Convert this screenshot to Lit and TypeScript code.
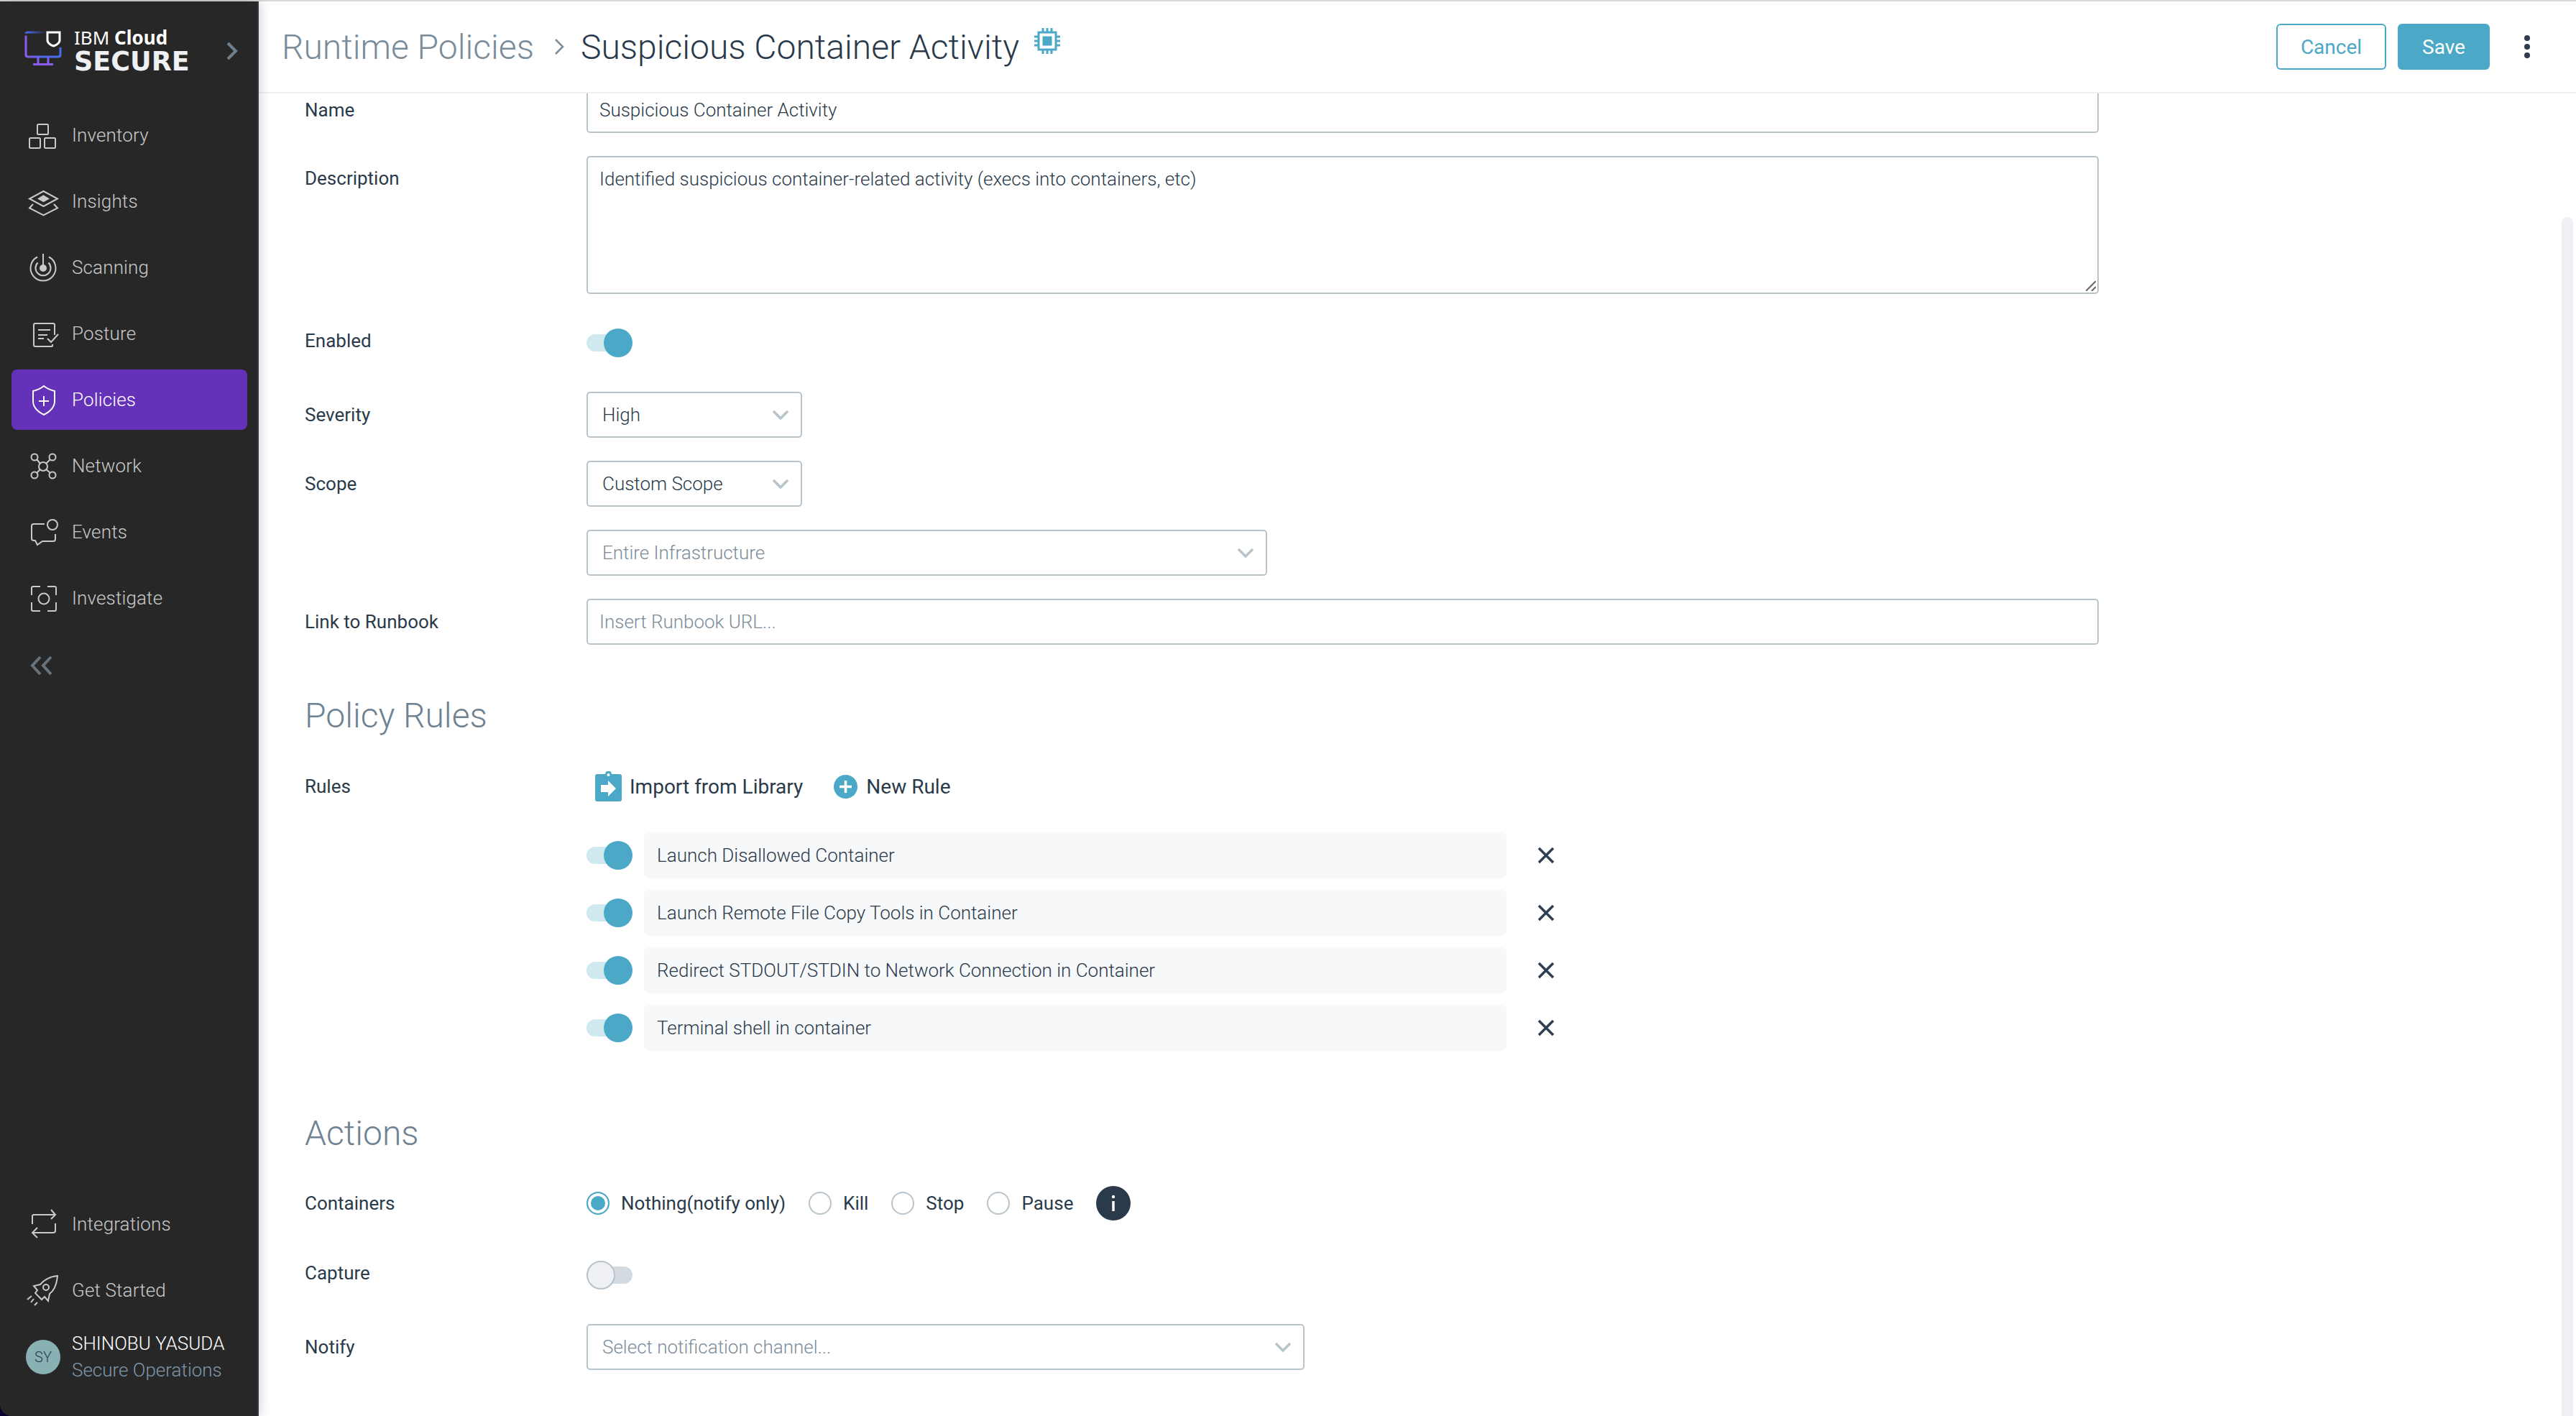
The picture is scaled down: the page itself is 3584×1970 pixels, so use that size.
import { LitElement, html, css, svg } from "lit";
import { customElement } from "lit/decorators.js";

const icons: Record<string, unknown> = {
  inventory: svg`<rect x="16" y="9" width="15" height="14" rx="1.5"/><rect x="5" y="28" width="15" height="14" rx="1.5"/><rect x="26" y="28" width="15" height="14" rx="1.5"/>`,
  insights: svg`<path d="M24.5 10 44 20.5 24.5 31 5 20.5Z"/><path d="M24.5 16.5 31 20.5 24.5 24 18 20.5Z" fill="currentColor"/><path d="M10 28 5 33.500 24.500 43.500 44 33.500 39 28"/>`,
  scanning: svg`<path d="M16 9.500A17.500 17.500 0 1 0 32 9.500"/><path d="M16.500 17.500A10.500 10.500 0 1 0 31.500 17.500"/><path d="M24 5V25"/><circle cx="24" cy="25" r="4" fill="currentColor"/>`,
  posture: svg`<path d="M37 39V41Q37 42 35 42H13Q11 42 11 40V12Q11 10 13 10H38Q40 10 40 12V26"/><path d="M17 19H34M17 26H30M17 31H25"/><path d="M30 31 35 36 45 25"/>`,
  policies: svg`<path d="M25 5C30 9 35 11 40 12V26C40 35 33 41 25 45 17 41 10 35 10 26V12C15 11 20 9 25 5Z"/><path d="M25 19V33M18 26H32"/>`,
  network: svg`<circle cx="24" cy="25" r="6"/><circle cx="12" cy="12" r="4.500"/><circle cx="37" cy="12" r="4.500"/><circle cx="12" cy="37" r="4.500"/><circle cx="37" cy="37" r="4.500"/><path d="M15.500 15.500 20 21M33.500 15.500 28 21M15.500 33.500 20 29M33.500 33.500 28 29"/>`,
  events: svg`<path d="M26 13H11Q8 13 8 16V33Q8 36 11 36H13L16 42 23 37H38Q41 37 41 34V27"/><circle cx="37" cy="14" r="7"/>`,
  investigate: svg`<path d="M20 8H10Q8 8 8 10V20M30 8H40Q42 8 42 10V20M42 30V40Q42 42 40 42H30M20 42H10Q8 42 8 40V30"/><circle cx="25" cy="25" r="7.500"/>`,
  integrations: svg`<path d="M9 24V13Q9 11 11 11H41"/><path d="M35 4 41 11 35 17"/><path d="M41 23V33Q41 36 38 36H10"/><path d="M16 29 9 36 16 43"/>`,
  rocket: svg`<path d="M44 4C33 5 26 9 20 16L11 18 16 24 13 28 22 37 26 33 31 39 33 29C40 24 43 15 44 4Z"/><circle cx="28" cy="20" r="4"/><path d="M2 37 8 32M7 41 11 36M12 45 16 41"/>`,
};

const chevron = html`<svg class="chev" viewBox="0 0 24 14"><path d="M2 2 12 12 22 2"/></svg>`;
const toggle = (on = true) => html`<span class="toggle ${on ? "on" : "off"}"><span class="track"></span><span class="knob"></span></span>`;

@customElement("app-root")
export class AppRoot extends LitElement {
  static styles = css`
    :host { display: block; font-family: Roboto, "Liberation Sans", sans-serif; color: #2a3a4a; }
    * { box-sizing: border-box; }
    .page { width: 3584px; height: 1970px; display: flex; flex-direction: column; background: #0b0333; overflow: hidden; }
    .strip { height: 2px; background: #d9d9d9; flex: none; }
    .body { flex: 1; display: flex; min-height: 0; background: linear-gradient(90deg, #0b0333 20px, #fff 20px); }
    .side { width: 360px; flex: none; background: #272727; border-right: 2px solid #2f3d4a; border-bottom-left-radius: 16px; box-shadow: 0 0 18px rgba(0,0,0,.22); position: relative; z-index: 2; display: flex; flex-direction: column; padding: 0 14px 0 16px; }
    .brand { height: 144px; flex: none; display: flex; align-items: flex-start; padding: 33px 0 0 19px; }
    .brand svg.logo { width: 52px; height: 50px; flex: none; overflow: visible; margin-top: 8px; }
    .brandtext { margin-left: 16px; display: flex; flex-direction: column; color: #eef0f4; width: 192px; }
    .brandtop { font-family: "Noto Sans", sans-serif; font-size: 26px; line-height: 34px; color: #fff; font-weight: 400; }
    .brandtop b { font-weight: 700; }
    .brandmain { font-family: "DejaVu Sans", sans-serif; font-size: 36.500px; line-height: 34px; font-weight: 700; }
    .brandchev { width: 18px; height: 26px; margin: 23px 0 0 19px; fill: none; stroke: #6e8090; stroke-width: 4; }
    .nav { display: flex; flex-direction: column; gap: 8px; }
    .item { height: 84px; display: flex; align-items: center; padding-left: 20px; border-radius: 8px; color: #c9c9c9; font-size: 26px; font-weight: 300; letter-spacing: 0.15px; }
    .item.active { background: #6332b9; color: #fff; }
    .item svg { width: 48px; height: 48px; flex: none; margin-right: 16px; fill: none; stroke: currentColor; stroke-width: 2; overflow: visible; }
    .collapse { height: 48px; flex: none; margin: 28px 0 0 26px; display: flex; align-items: center; }
    .collapse svg { width: 32px; height: 28px; fill: none; stroke: #68727a; stroke-width: 4; }
    .grow { flex: 1; }
    .user { height: 84px; flex: none; display: flex; align-items: center; padding-left: 20px; margin: 9px 0 40px; }
    .avatar { width: 48px; height: 48px; border-radius: 50%; background: #89b1b4; color: #2a3a4a; font-size: 20px; font-weight: 300; display: flex; align-items: center; justify-content: center; flex: none; margin-right: 16px; }
    .uname { font-size: 26px; font-weight: 300; color: #fff; line-height: 37px; white-space: nowrap; }
    .urole { font-size: 26px; font-weight: 300; color: #7d97aa; line-height: 37px; white-space: nowrap; }
    .main { flex: 1; min-width: 0; background: #fff; display: flex; flex-direction: column; position: relative; }
    .head { height: 128px; flex: none; border-bottom: 2px solid #f0f0f5; display: flex; align-items: center; padding: 0 64px 0 32px; background: #fff; position: relative; z-index: 1; }
    .crumb { font-size: 48px; font-weight: 300; color: #7a8c99; }
    .sep { width: 14px; height: 24px; margin: 0 23px 0 28px; fill: none; stroke: #7a8c99; stroke-width: 2.500; }
    .title { font-size: 48px; font-weight: 300; color: #2a3a4a; }
    .chip { width: 36px; height: 36px; margin: -16px 0 0 21px; fill: none; stroke: #4ba8c6; stroke-width: 3; flex: none; }
    .btns { margin-left: auto; display: flex; align-items: center; }
    .btn { height: 64px; border-radius: 6px; display: flex; align-items: center; justify-content: center; font-size: 28px; border: 2px solid #4ba8c6; }
    .cancel { width: 153px; color: #4ba8c6; background: #fff; }
    .save { width: 128px; color: #fff; background: #4ba8c6; margin-left: 16px; }
    .dots { width: 8px; margin-left: 48px; display: flex; flex-direction: column; gap: 4px; }
    .dots i { width: 8px; height: 8px; border-radius: 50%; background: #2f3e4f; }
    .content { flex: 1; min-height: 0; overflow: hidden; padding-left: 64px; position: relative; }
    .form { margin-top: -9px; display: flex; flex-direction: column; width: 2496px; }
    .row { display: flex; align-items: center; }
    .row.top { align-items: flex-start; }
    .gap32 { margin-top: 32px; }
    .gap48 { margin-top: 48px; }
    .label { width: 392px; flex: none; font-size: 26px; color: #2a3a4a; }
    .label.up { margin-top: -6px; }
    .top > .label { padding-top: 16px; }
    .input, .area { font: 300 26px Roboto, sans-serif; color: #2a3a4a; border: 2px solid #b8c4cc; border-radius: 5px; background: #fff; outline: none; padding: 0 16px; display: block; }
    .input { height: 64px; flex: none; width: 2104px; }
    .input::placeholder { color: #7d8c99; opacity: 1; }
    .areawrap { position: relative; width: 2104px; height: 192px; flex: none; }
    .area { width: 100%; height: 100%; padding-top: 14px; line-height: 32px; resize: none; }
    .grip { position: absolute; right: 4px; bottom: 4px; width: 14px; height: 14px; fill: none; stroke: #666; stroke-width: 2; }
    .sel { height: 64px; border: 2px solid #b8c4cc; border-radius: 5px; display: flex; align-items: center; justify-content: space-between; padding: 0 16px 0 20px; font-size: 26px; font-weight: 300; color: #2a3a4a; }
    .sel.ph { color: #7d8c99; }
    .w300 { width: 300px; }
    .w947 { width: 947px; }
    .w999 { width: 999px; }
    .chev { width: 24px; height: 14px; fill: none; stroke: #b8c4cc; stroke-width: 3.500; flex: none; }
    .toggle { width: 64px; height: 40px; position: relative; display: block; flex: none; }
    .track { position: absolute; left: 0; top: 8px; width: 64px; height: 24px; border-radius: 12px; }
    .knob { position: absolute; top: 0; width: 40px; height: 40px; border-radius: 50%; }
    .on .track { background: #d0e9ee; width: 54px; }
    .on .knob { right: 0; background: #4ba8c6; }
    .off .track { background: #d3dae0; }
    .off .knob { left: 0; background: #eef0f4; border: 2px solid #b8c4cc; }
    h2 { font-size: 48px; font-weight: 300; color: #6f8291; margin: 0; line-height: 56px; }
    .h-rules { margin-top: 71px; }
    .h-actions { margin-top: 87px; }
    .tools-row { margin-top: 49px; }
    .rules-row { margin-top: 43px; }
    .cont-row { margin-top: 45px; }
    .cap-row { margin-top: 56px; }
    .notify-row { margin-top: 48px; }
    .tools { display: flex; align-items: center; height: 42px; font-size: 28px; color: #2a3a4a; padding-left: 12px; }
    .tools svg { flex: none; }
    .tools .imp { width: 37px; height: 42px; margin-right: 11px; }
    .tools .plus { width: 33px; height: 33px; margin: 0 12px 0 43px; }
    .rules { display: flex; flex-direction: column; gap: 16px; }
    .rule { display: flex; align-items: center; height: 64px; }
    .rname { width: 1200px; height: 64px; margin-left: 16px; background: #f7f8fa; border-radius: 8px; display: flex; align-items: center; padding-left: 18px; font-size: 26px; font-weight: 300; color: #2a3a4a; }
    .x { width: 24px; height: 24px; margin-left: 43px; fill: none; stroke: #2f3e4f; stroke-width: 3.500; }
    .radios { display: flex; align-items: center; font-size: 26px; color: #2a3a4a; }
    .radio { width: 32px; height: 32px; border-radius: 50%; border: 2px solid #b8c4cc; flex: none; margin-right: 16px; }
    .radio.sel2 { border-color: #4ba8c6; background: #4ba8c6; box-shadow: inset 0 0 0 4px #fff; }
    .rlabel { margin-right: 32px; }
    .info { width: 48px; height: 48px; border-radius: 50%; background: #2a3a4a; color: #fff; flex: none; }
    .scroll { position: absolute; right: 4px; top: 172px; bottom: 0; width: 16px; background: #eef0f4; border-radius: 8px 8px 0 0; }
  `;

  private item(icon: string, label: string, active = false) {
    return html`<div class="item ${active ? "active" : ""}"><svg viewBox="0 0 48 48">${icons[icon]}</svg>${label}</div>`;
  }

  render() {
    const rules = ["Launch Disallowed Container", "Launch Remote File Copy Tools in Container", "Redirect STDOUT/STDIN to Network Connection in Container", "Terminal shell in container"];
    return html`<div class="page">
      <div class="strip"></div>
      <div class="body">
        <aside class="side">
          <div class="brand">
            <svg class="logo" viewBox="0 0 52 50">
              <defs><linearGradient id="lg" x1="0" y1="0" x2="1" y2="0"><stop offset="0" stop-color="#8a5cf0"/><stop offset=".5" stop-color="#4a6cf0"/><stop offset="1" stop-color="#4a6cf0"/></linearGradient>
              <linearGradient id="lg2" x1="0" y1="0" x2="1" y2="0"><stop offset="0" stop-color="#4a6cf0"/><stop offset="1" stop-color="#4a6cf0" stop-opacity="0"/></linearGradient></defs>
              <path d="M1 6.500V33Q1 36 4 36H46Q49 36 49 33V23" fill="none" stroke="url(#lg)" stroke-width="3"/>
              <path d="M1 4.500Q1 3 4 3H30" fill="none" stroke="url(#lg2)" stroke-width="3" transform="translate(0,-1)"/>
              <path d="M18 36V45M32 36V45M11 46.500H39" fill="none" stroke="#8a5cf0" stroke-width="3"/>
              <path d="M31 2H48V13C48 17 43 20 39.500 21 36 20 31 17 31 13Z" fill="none" stroke="#fff" stroke-width="3"/>
            </svg>
            <div class="brandtext">
              <div class="brandtop">IBM <b>Cloud</b></div>
              <div class="brandmain">SECURE</div>
            </div>
            <svg class="brandchev" viewBox="0 0 18 26"><path d="M3 2 14 13 3 24"/></svg>
          </div>
          <nav class="nav">
            ${this.item("inventory", "Inventory")}
            ${this.item("insights", "Insights")}
            ${this.item("scanning", "Scanning")}
            ${this.item("posture", "Posture")}
            ${this.item("policies", "Policies", true)}
            ${this.item("network", "Network")}
            ${this.item("events", "Events")}
            ${this.item("investigate", "Investigate")}
          </nav>
          <div class="collapse"><svg viewBox="0 0 32 28"><path d="M14 2 3 14 14 26M29 2 18 14 29 26"/></svg></div>
          <div class="grow"></div>
          <nav class="nav">
            ${this.item("integrations", "Integrations")}
            ${this.item("rocket", "Get Started")}
          </nav>
          <div class="user">
            <div class="avatar">SY</div>
            <div><div class="uname">SHINOBU YASUDA</div><div class="urole">Secure Operations</div></div>
          </div>
        </aside>
        <main class="main">
          <header class="head">
            <span class="crumb">Runtime Policies</span>
            <svg class="sep" viewBox="0 0 14 24"><path d="M2 2 12 12 2 22"/></svg>
            <span class="title">Suspicious Container Activity</span>
            <svg class="chip" viewBox="0 0 36 36"><rect x="6" y="6" width="24" height="24"/><rect x="13" y="13" width="10" height="10" fill="#4ba8c6"/><path d="M12 0V6M18 0V6M24 0V6M12 30V36M18 30V36M24 30V36M0 12H6M0 18H6M0 24H6M30 12H36M30 18H36M30 24H36"/></svg>
            <div class="btns">
              <div class="btn cancel">Cancel</div>
              <div class="btn save">Save</div>
              <div class="dots"><i></i><i></i><i></i></div>
            </div>
          </header>
          <div class="content">
            <div class="form">
              <div class="row"><div class="label">Name</div><input class="input" value="Suspicious Container Activity" /></div>
              <div class="row top gap32"><div class="label">Description</div><div class="areawrap"><textarea class="area">Identified suspicious container-related activity (execs into containers, etc)</textarea><svg class="grip" viewBox="0 0 14 14"><path d="M0 14 14 0M8 14 14 8"/></svg></div></div>
              <div class="row gap48"><div class="label up">Enabled</div>${toggle()}</div>
              <div class="row gap48"><div class="label">Severity</div><div class="sel w300">High${chevron}</div></div>
              <div class="row gap32"><div class="label">Scope</div><div class="sel w300">Custom Scope${chevron}</div></div>
              <div class="row gap32"><div class="label"></div><div class="sel ph w947">Entire Infrastructure${chevron}</div></div>
              <div class="row gap32"><div class="label">Link to Runbook</div><input class="input" placeholder="Insert Runbook URL..." /></div>
              <h2 class="h-rules">Policy Rules</h2>
              <div class="row tools-row"><div class="label">Rules</div>
                <div class="tools">
                  <svg class="imp" viewBox="0 0 37 42"><path d="M3 4H14A4.500 4.500 0 0 1 23 4H34Q37 4 37 7V39Q37 42 34 42H3Q0 42 0 39V7Q0 4 3 4Z" fill="#4ba8c6"/><circle cx="18.500" cy="5" r="2" fill="#fff"/><path d="M8 19H18V13L29 24 18 35V29H8Z" fill="#fff"/></svg>
                  Import from Library
                  <svg class="plus" viewBox="0 0 33 33"><circle cx="16.500" cy="16.500" r="16.500" fill="#4ba8c6"/><path d="M16.500 8V25M8 16.500H25" stroke="#fff" stroke-width="3.500"/></svg>
                  New Rule
                </div>
              </div>
              <div class="row rules-row"><div class="label"></div>
                <div class="rules">
                  ${rules.map((r) => html`<div class="rule">${toggle()}<div class="rname">${r}</div><svg class="x" viewBox="0 0 24 24"><path d="M2 2 22 22M22 2 2 22"/></svg></div>`)}
                </div>
              </div>
              <h2 class="h-actions">Actions</h2>
              <div class="row cont-row"><div class="label">Containers</div>
                <div class="radios">
                  <span class="radio sel2"></span><span class="rlabel">Nothing(notify only)</span>
                  <span class="radio"></span><span class="rlabel">Kill</span>
                  <span class="radio"></span><span class="rlabel">Stop</span>
                  <span class="radio"></span><span class="rlabel">Pause</span>
                  <svg class="info" viewBox="0 0 48 48"><path d="M24 21V35" stroke="#fff" stroke-width="3.500"/><circle cx="24" cy="15" r="2.200" fill="#fff"/></svg>
                </div>
              </div>
              <div class="row cap-row"><div class="label up">Capture</div>${toggle(false)}</div>
              <div class="row notify-row"><div class="label">Notify</div><div class="sel ph w999">Select notification channel...${chevron}</div></div>
            </div>
            <div class="scroll"></div>
          </div>
        </main>
      </div>
    </div>`;
  }
}
